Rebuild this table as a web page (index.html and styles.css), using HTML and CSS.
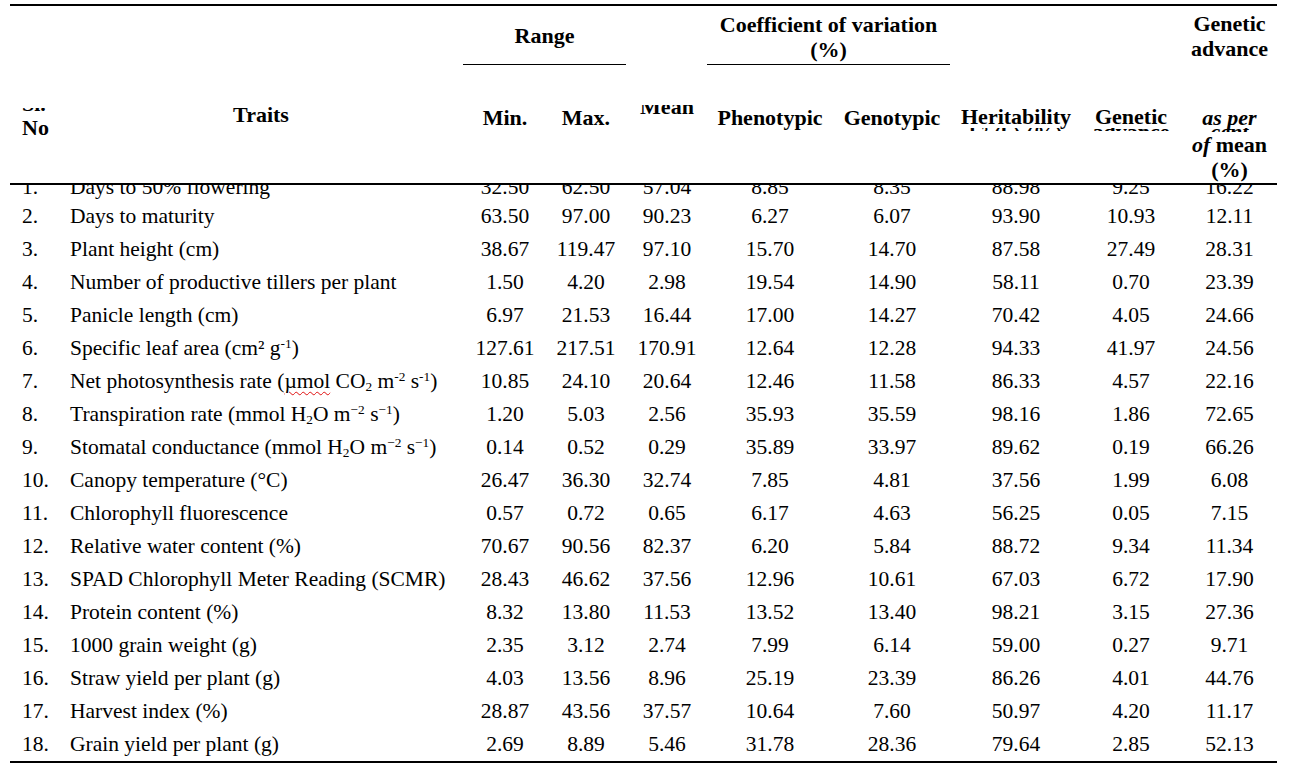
FILE: index.html
```html
<!DOCTYPE html>
<html lang="en">
<head>
<meta charset="utf-8">
<title>Genetic variability table</title>
<link rel="stylesheet" href="styles.css">
</head>
<body>
<div class="page">
  <div class="table">
    <div class="thead">
      <div class="h range">Range</div>
      <div class="h cv">Coefficient of variation<br>(%)</div>
      <div class="h gatitle">Genetic<br>advance</div>
      <div class="h c-no"><div class="clip clip-sl"><div class="clip-in">Sl.</div></div><div class="no">No</div></div>
      <div class="h c-traits">Traits</div>
      <div class="h c-min">Min.</div>
      <div class="h c-max">Max.</div>
      <div class="h c-mean"><div class="clip clip-mean"><div class="clip-in">Mean</div></div></div>
      <div class="h c-phen">Phenotypic</div>
      <div class="h c-gen">Genotypic</div>
      <div class="h c-her">Heritability<div class="clip clip-under"><div class="clip-in in-h">h² (b) (%)</div></div></div>
      <div class="h c-ga">Genetic<div class="clip clip-under"><div class="clip-in in-x">advance</div></div></div>
      <div class="h c-gap"><div class="asper"><i class="it">as per</i></div><div class="clip clip-under"><div class="clip-in in-x"><i class="it">cent</i></div></div><div class="lh25"><i class="it">of</i> mean<br>(%)</div></div>
    </div>
    <div class="tbody">
      <div class="first-clip">
        <div class="row first">
          <div class="c c1">1.</div><div class="c c2">Days to 50% flowering</div><div class="c">32.50</div><div class="c">62.50</div><div class="c">57.04</div><div class="c">8.85</div><div class="c">8.35</div><div class="c">88.98</div><div class="c">9.25</div><div class="c">16.22</div>
        </div>
      </div>
      <div class="row"><div class="c c1">2.</div><div class="c c2">Days to maturity</div><div class="c">63.50</div><div class="c">97.00</div><div class="c">90.23</div><div class="c">6.27</div><div class="c">6.07</div><div class="c">93.90</div><div class="c">10.93</div><div class="c">12.11</div></div>
      <div class="row"><div class="c c1">3.</div><div class="c c2">Plant height (cm)</div><div class="c">38.67</div><div class="c">119.47</div><div class="c">97.10</div><div class="c">15.70</div><div class="c">14.70</div><div class="c">87.58</div><div class="c">27.49</div><div class="c">28.31</div></div>
      <div class="row"><div class="c c1">4.</div><div class="c c2">Number of productive tillers per plant</div><div class="c">1.50</div><div class="c">4.20</div><div class="c">2.98</div><div class="c">19.54</div><div class="c">14.90</div><div class="c">58.11</div><div class="c">0.70</div><div class="c">23.39</div></div>
      <div class="row"><div class="c c1">5.</div><div class="c c2">Panicle length (cm)</div><div class="c">6.97</div><div class="c">21.53</div><div class="c">16.44</div><div class="c">17.00</div><div class="c">14.27</div><div class="c">70.42</div><div class="c">4.05</div><div class="c">24.66</div></div>
      <div class="row"><div class="c c1">6.</div><div class="c c2">Specific leaf area (cm² g<sup>-1</sup>)</div><div class="c">127.61</div><div class="c">217.51</div><div class="c">170.91</div><div class="c">12.64</div><div class="c">12.28</div><div class="c">94.33</div><div class="c">41.97</div><div class="c">24.56</div></div>
      <div class="row"><div class="c c1">7.</div><div class="c c2">Net photosynthesis rate (<span class="spell">µmol</span> CO<sub>2</sub> m<sup>-2</sup> s<sup>-1</sup>)</div><div class="c">10.85</div><div class="c">24.10</div><div class="c">20.64</div><div class="c">12.46</div><div class="c">11.58</div><div class="c">86.33</div><div class="c">4.57</div><div class="c">22.16</div></div>
      <div class="row"><div class="c c1">8.</div><div class="c c2">Transpiration rate (mmol H<sub>2</sub>O m<sup>−2</sup> s<sup>−1</sup>)</div><div class="c">1.20</div><div class="c">5.03</div><div class="c">2.56</div><div class="c">35.93</div><div class="c">35.59</div><div class="c">98.16</div><div class="c">1.86</div><div class="c">72.65</div></div>
      <div class="row"><div class="c c1">9.</div><div class="c c2">Stomatal conductance (mmol H<sub>2</sub>O m<sup>−2</sup> s<sup>−1</sup>)</div><div class="c">0.14</div><div class="c">0.52</div><div class="c">0.29</div><div class="c">35.89</div><div class="c">33.97</div><div class="c">89.62</div><div class="c">0.19</div><div class="c">66.26</div></div>
      <div class="row"><div class="c c1">10.</div><div class="c c2">Canopy temperature (°C)</div><div class="c">26.47</div><div class="c">36.30</div><div class="c">32.74</div><div class="c">7.85</div><div class="c">4.81</div><div class="c">37.56</div><div class="c">1.99</div><div class="c">6.08</div></div>
      <div class="row"><div class="c c1">11.</div><div class="c c2">Chlorophyll fluorescence</div><div class="c">0.57</div><div class="c">0.72</div><div class="c">0.65</div><div class="c">6.17</div><div class="c">4.63</div><div class="c">56.25</div><div class="c">0.05</div><div class="c">7.15</div></div>
      <div class="row"><div class="c c1">12.</div><div class="c c2">Relative water content (%)</div><div class="c">70.67</div><div class="c">90.56</div><div class="c">82.37</div><div class="c">6.20</div><div class="c">5.84</div><div class="c">88.72</div><div class="c">9.34</div><div class="c">11.34</div></div>
      <div class="row"><div class="c c1">13.</div><div class="c c2">SPAD Chlorophyll Meter Reading (SCMR)</div><div class="c">28.43</div><div class="c">46.62</div><div class="c">37.56</div><div class="c">12.96</div><div class="c">10.61</div><div class="c">67.03</div><div class="c">6.72</div><div class="c">17.90</div></div>
      <div class="row"><div class="c c1">14.</div><div class="c c2">Protein content (%)</div><div class="c">8.32</div><div class="c">13.80</div><div class="c">11.53</div><div class="c">13.52</div><div class="c">13.40</div><div class="c">98.21</div><div class="c">3.15</div><div class="c">27.36</div></div>
      <div class="row"><div class="c c1">15.</div><div class="c c2">1000 grain weight (g)</div><div class="c">2.35</div><div class="c">3.12</div><div class="c">2.74</div><div class="c">7.99</div><div class="c">6.14</div><div class="c">59.00</div><div class="c">0.27</div><div class="c">9.71</div></div>
      <div class="row"><div class="c c1">16.</div><div class="c c2">Straw yield per plant (g)</div><div class="c">4.03</div><div class="c">13.56</div><div class="c">8.96</div><div class="c">25.19</div><div class="c">23.39</div><div class="c">86.26</div><div class="c">4.01</div><div class="c">44.76</div></div>
      <div class="row"><div class="c c1">17.</div><div class="c c2">Harvest index (%)</div><div class="c">28.87</div><div class="c">43.56</div><div class="c">37.57</div><div class="c">10.64</div><div class="c">7.60</div><div class="c">50.97</div><div class="c">4.20</div><div class="c">11.17</div></div>
      <div class="row"><div class="c c1">18.</div><div class="c c2">Grain yield per plant (g)</div><div class="c">2.69</div><div class="c">8.89</div><div class="c">5.46</div><div class="c">31.78</div><div class="c">28.36</div><div class="c">79.64</div><div class="c">2.85</div><div class="c">52.13</div></div>
    </div>
  </div>
</div>
</body>
</html>
```

FILE: styles.css
```css
html, body {
  margin: 0;
  padding: 0;
  background: #fff;
}
body {
  font-family: "Liberation Serif", "Times New Roman", serif;
  color: #000;
  font-size: 21.5px;
}
.page {
  padding: 4px 0 0 10px;
}
.table {
  width: 1267px;
  --cols: 48px 406px 82px 80px 82px 124px 120px 128px 102px 95px;
}

/* ---------- header ---------- */
.thead {
  display: grid;
  grid-template-columns: var(--cols);
  grid-template-rows: 59px 118px;
  border-top: 2px solid #000;
  border-bottom: 2px solid #000;
  font-weight: bold;
  font-size: 22px;
  line-height: 21px;
}
.h {
  text-align: center;
  white-space: nowrap;
}
.range {
  grid-column: 3 / 5;
  grid-row: 1;
  line-height: 25px;
  padding-top: 17px;
  border-bottom: 1.5px solid #000;
  margin-left: -1px;
}
.cv {
  grid-column: 6 / 8;
  grid-row: 1;
  line-height: 25px;
  padding-top: 6px;
  border-bottom: 1.5px solid #000;
  margin-left: -1px;
  margin-right: 2px;
}
.gatitle {
  grid-column: 10;
  grid-row: 1;
  line-height: 25px;
  padding-top: 5px;
}
.c-no {
  grid-column: 1;
  grid-row: 2;
  text-align: left;
  padding-left: 12px;
  padding-top: 43px;
}
.c-no .no {
  margin-top: 6px;
}
.c-traits { grid-column: 2; grid-row: 2; padding-top: 39px; }
.c-min { grid-column: 3; grid-row: 2; padding-top: 42px; }
.c-max { grid-column: 4; grid-row: 2; padding-top: 42px; }
.c-mean { grid-column: 5; grid-row: 2; padding-top: 40px; }
.c-phen { grid-column: 6; grid-row: 2; padding-top: 42px; }
.c-gen { grid-column: 7; grid-row: 2; padding-top: 42px; }
.c-her { grid-column: 8; grid-row: 2; padding-top: 41px; }
.c-ga { grid-column: 9; grid-row: 2; padding-top: 41px; }
.c-gap { grid-column: 10; grid-row: 2; padding-top: 42px; }
.it { font-style: italic; font-weight: bold; }
.c-gap .lh25 { line-height: 25px; margin-top: 0.5px; }

/* clipped (partially hidden) header lines */
.clip {
  overflow: hidden;
}
.clip-sl { height: 3px; }
.clip-sl .clip-in { margin-top: -15px; }
.clip-mean { height: 9px; }
.clip-mean .clip-in { margin-top: -9px; }
.clip-under { height: 3.5px; margin-top: 0.9px; }
.c-gap .clip-under { margin-top: 0; }
.clip-under .in-h { margin-top: -5px; }
.clip-under .in-x { margin-top: -7px; }

/* ---------- body ---------- */
.tbody {
  border-bottom: 2px solid #000;
}
.row {
  display: grid;
  grid-template-columns: var(--cols);
  height: 33px;
  line-height: 33px;
}
.first-clip {
  height: 15px;
  overflow: hidden;
}
.row.first {
  margin-top: -13.8px;
}
.c {
  text-align: center;
  white-space: nowrap;
}
.c1, .c2 {
  text-align: left;
  padding-left: 12px;
}
sup, sub {
  font-size: 0.62em;
  line-height: 0;
}
sup { vertical-align: 0.55em; }
sub { vertical-align: -0.2em; }
.spell {
  text-decoration: underline wavy #e01010;
  text-decoration-thickness: 1px;
  text-underline-offset: 3px;
}
```
